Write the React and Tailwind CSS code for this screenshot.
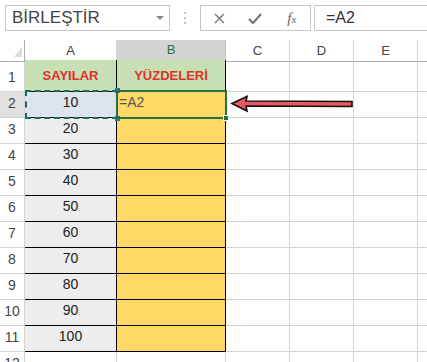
import React from "react";

const cols = ["A", "B", "C", "D", "E"];
const nums = [10, 20, 30, 40, 50, 60, 70, 80, 90, 100];
const grid = "grid grid-cols-[25px_92px_109px_64px_64px_64px_9px]";

const Row = ({ n, h, a, b, rowSel }) => (
  <div className={`${grid} ${h}`}>
    <div
      className={`flex items-end justify-center pb-[3px] text-[14px] text-[#444] border-r border-b border-[#d4d4d4] ${
        rowSel ? "bg-[#e1e1e1]" : "bg-white"
      }`}
    >
      {n}
    </div>
    {a}
    {b}
    <div className="border-r border-b border-[#d4d4d4]" />
    <div className="border-r border-b border-[#d4d4d4]" />
    <div className="border-r border-b border-[#d4d4d4]" />
    <div className="border-b border-[#d4d4d4]" />
  </div>
);

export default function App() {
  return (
    <div className="relative w-[427px] h-[362px] overflow-hidden bg-white font-['Liberation_Sans',sans-serif]">
      {/* formula bar */}
      <div className="flex h-[40px] pt-[5px] pl-[5px]">
        <div className="flex items-center justify-between w-[165px] h-[26px] border border-[#c6c6c6] pl-[6px] pr-[5px]">
          <span className="text-[17px] text-[#444]">BİRLEŞTİR</span>
          <svg width="8" height="5" viewBox="0 0 8 5">
            <path d="M0 0 L8 0 L4 4 Z" fill="#8a8a8a" />
          </svg>
        </div>
        <div className="flex flex-col items-center justify-center gap-[3px] w-[30px] h-[26px]">
          <span className="w-[2px] h-[2px] bg-[#c2c2c2]" />
          <span className="w-[2px] h-[2px] bg-[#c2c2c2]" />
          <span className="w-[2px] h-[2px] bg-[#c2c2c2]" />
        </div>
        <div className="flex items-center w-[111px] h-[26px] border border-[#c6c6c6]">
          <div className="w-[37px] flex justify-center">
            <svg width="11" height="11" viewBox="0 0 11 11">
              <path d="M1 1 L10 10 M10 1 L1 10" stroke="#777" strokeWidth="1.4" />
            </svg>
          </div>
          <div className="w-[37px] flex justify-center">
            <svg width="14" height="11" viewBox="0 0 14 11">
              <path d="M1 6 L5 10 L13 1" stroke="#777" strokeWidth="2.2" fill="none" />
            </svg>
          </div>
          <div className="w-[37px] flex justify-center">
            <span className="italic font-['Liberation_Serif',serif] text-[15px] text-[#666] leading-none">
              f<span className="text-[11px]">x</span>
            </span>
          </div>
        </div>
        <div className="flex items-center flex-1 h-[26px] ml-[3px] border border-r-0 border-[#c6c6c6] pl-[11px]">
          <span className="text-[16px] text-[#333]">=A2</span>
        </div>
      </div>

      {/* column headers */}
      <div className={`${grid} h-[20px] text-[13px] text-[#444]`}>
        <div className="relative border-r border-b border-[#ababab] bg-white">
          <svg className="absolute left-[14px] top-[7px]" width="8" height="10" viewBox="0 0 8 10">
            <path d="M8 0 L8 10 L0 10 Z" fill="#dadada" />
          </svg>
        </div>
        {cols.map((c) => (
          <div
            key={c}
            className={`flex items-center justify-center border-r ${
              c === "B"
                ? "bg-[#d4d4d4] border-b-2 border-b-[#217346] border-r-[#c0c0c0] text-[#217346]"
                : "bg-white border-b border-[#d4d4d4] border-b-[#ababab]"
            }`}
          >
            {c}
          </div>
        ))}
        <div className="bg-white border-b border-[#ababab]" />
      </div>

      {/* row 1 */}
      <Row
        n={1}
        h="h-[32px]"
        a={
          <div className="flex items-center justify-center bg-[#c6e0b4] border-r border-b border-black text-[13px] font-bold text-[#e0302a]">
            SAYILAR
          </div>
        }
        b={
          <div className="flex items-center justify-center bg-[#c6e0b4] border-r border-b border-black text-[13px] font-bold text-[#e0302a]">
            YÜZDELERİ
          </div>
        }
      />

      {nums.map((v, i) => (
        <Row
          key={v}
          n={i + 2}
          h="h-[26px]"
          rowSel={i === 0}
          a={
            <div
              className={`flex items-end justify-center pb-[4px] border-r border-b border-black text-[14px] text-[#222] ${
                i === 0 ? "bg-[#dde4ee]" : "bg-[#ededed]"
              }`}
            >
              {v}
            </div>
          }
          b={
            <div className="flex items-end pl-[2px] pb-[4px] bg-[#ffd966] border-r border-b border-black text-[14px] text-[#555]">
              {i === 0 ? "=A2" : ""}
            </div>
          }
        />
      ))}
      <Row n={12} h="h-[26px]" a={<div className="border-r border-b border-[#d4d4d4]" />} b={<div className="border-r border-b border-[#d4d4d4]" />} />

      {/* copy marquee around A2 */}
      <div className="absolute left-[25px] top-[90px] w-[93px] h-[29px] border-2 border-dashed border-[#1f6b5a]">
        <span className="absolute -right-[4px] -top-[4px] w-[5px] h-[5px] bg-[#3a6fa0]" />
        <span className="absolute -right-[4px] -bottom-[4px] w-[5px] h-[5px] bg-[#3a6fa0]" />
      </div>

      {/* active cell B2 */}
      <div className="absolute left-[116px] top-[90px] w-[111px] h-[29px] border-2 border-[#217346]">
        <span className="absolute -right-[4px] -bottom-[4px] w-[6px] h-[6px] bg-[#217346] border border-white" />
      </div>

      {/* arrow */}
      <svg className="absolute left-[230px] top-[94px]" width="126" height="20" viewBox="0 0 126 20">
        <path
          d="M2 9.5 L17 2.5 L16 7 L122 7.5 L122 12.5 L16 12 L17 17 Z"
          fill="#e8585c"
          stroke="#111"
          strokeWidth="1.6"
          strokeLinejoin="miter"
        />
      </svg>
    </div>
  );
}
